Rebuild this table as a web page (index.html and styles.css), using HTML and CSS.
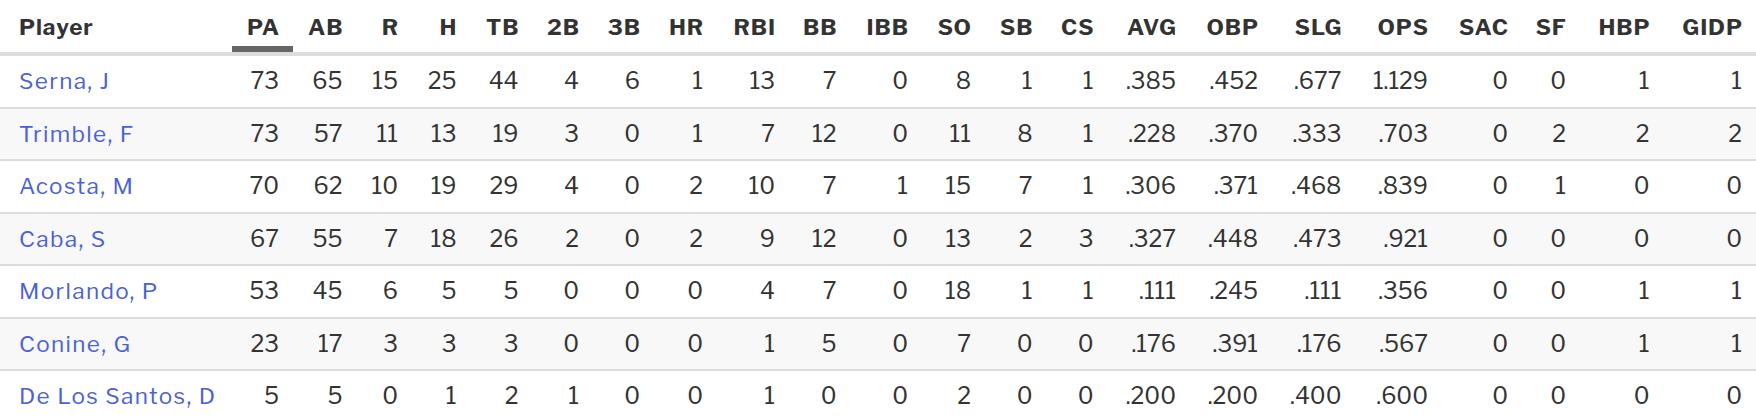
FILE: index.html
```html
<!DOCTYPE html>
<html lang="en">
<head>
<meta charset="utf-8">
<title>Batting stats</title>
<link rel="stylesheet" href="styles.css">
</head>
<body>
<div class="stats">
  <div class="row head">
    <div class="cell name">Player</div>
    <div class="cell sorted">PA</div><div class="cell">AB</div><div class="cell">R</div><div class="cell">H</div><div class="cell">TB</div><div class="cell">2B</div><div class="cell">3B</div><div class="cell">HR</div><div class="cell">RBI</div><div class="cell">BB</div><div class="cell">IBB</div><div class="cell">SO</div><div class="cell">SB</div><div class="cell">CS</div><div class="cell">AVG</div><div class="cell">OBP</div><div class="cell">SLG</div><div class="cell">OPS</div><div class="cell">SAC</div><div class="cell">SF</div><div class="cell">HBP</div><div class="cell">GIDP</div>
  </div>
  <div class="row">
    <div class="cell name"><a href="#">Serna, J</a></div>
    <div class="cell">73</div><div class="cell">65</div><div class="cell">15</div><div class="cell">25</div><div class="cell">44</div><div class="cell">4</div><div class="cell">6</div><div class="cell">1</div><div class="cell">13</div><div class="cell">7</div><div class="cell">0</div><div class="cell">8</div><div class="cell">1</div><div class="cell">1</div><div class="cell">.385</div><div class="cell">.452</div><div class="cell">.677</div><div class="cell">1.129</div><div class="cell">0</div><div class="cell">0</div><div class="cell">1</div><div class="cell">1</div>
  </div>
  <div class="row alt">
    <div class="cell name"><a href="#">Trimble, F</a></div>
    <div class="cell">73</div><div class="cell">57</div><div class="cell">11</div><div class="cell">13</div><div class="cell">19</div><div class="cell">3</div><div class="cell">0</div><div class="cell">1</div><div class="cell">7</div><div class="cell">12</div><div class="cell">0</div><div class="cell">11</div><div class="cell">8</div><div class="cell">1</div><div class="cell">.228</div><div class="cell">.370</div><div class="cell">.333</div><div class="cell">.703</div><div class="cell">0</div><div class="cell">2</div><div class="cell">2</div><div class="cell">2</div>
  </div>
  <div class="row">
    <div class="cell name"><a href="#">Acosta, M</a></div>
    <div class="cell">70</div><div class="cell">62</div><div class="cell">10</div><div class="cell">19</div><div class="cell">29</div><div class="cell">4</div><div class="cell">0</div><div class="cell">2</div><div class="cell">10</div><div class="cell">7</div><div class="cell">1</div><div class="cell">15</div><div class="cell">7</div><div class="cell">1</div><div class="cell">.306</div><div class="cell">.371</div><div class="cell">.468</div><div class="cell">.839</div><div class="cell">0</div><div class="cell">1</div><div class="cell">0</div><div class="cell">0</div>
  </div>
  <div class="row alt">
    <div class="cell name"><a href="#">Caba, S</a></div>
    <div class="cell">67</div><div class="cell">55</div><div class="cell">7</div><div class="cell">18</div><div class="cell">26</div><div class="cell">2</div><div class="cell">0</div><div class="cell">2</div><div class="cell">9</div><div class="cell">12</div><div class="cell">0</div><div class="cell">13</div><div class="cell">2</div><div class="cell">3</div><div class="cell">.327</div><div class="cell">.448</div><div class="cell">.473</div><div class="cell">.921</div><div class="cell">0</div><div class="cell">0</div><div class="cell">0</div><div class="cell">0</div>
  </div>
  <div class="row">
    <div class="cell name"><a href="#">Morlando, P</a></div>
    <div class="cell">53</div><div class="cell">45</div><div class="cell">6</div><div class="cell">5</div><div class="cell">5</div><div class="cell">0</div><div class="cell">0</div><div class="cell">0</div><div class="cell">4</div><div class="cell">7</div><div class="cell">0</div><div class="cell">18</div><div class="cell">1</div><div class="cell">1</div><div class="cell">.111</div><div class="cell">.245</div><div class="cell">.111</div><div class="cell">.356</div><div class="cell">0</div><div class="cell">0</div><div class="cell">1</div><div class="cell">1</div>
  </div>
  <div class="row alt">
    <div class="cell name"><a href="#">Conine, G</a></div>
    <div class="cell">23</div><div class="cell">17</div><div class="cell">3</div><div class="cell">3</div><div class="cell">3</div><div class="cell">0</div><div class="cell">0</div><div class="cell">0</div><div class="cell">1</div><div class="cell">5</div><div class="cell">0</div><div class="cell">7</div><div class="cell">0</div><div class="cell">0</div><div class="cell">.176</div><div class="cell">.391</div><div class="cell">.176</div><div class="cell">.567</div><div class="cell">0</div><div class="cell">0</div><div class="cell">1</div><div class="cell">1</div>
  </div>
  <div class="row">
    <div class="cell name"><a href="#">De Los Santos, D</a></div>
    <div class="cell">5</div><div class="cell">5</div><div class="cell">0</div><div class="cell">1</div><div class="cell">2</div><div class="cell">1</div><div class="cell">0</div><div class="cell">0</div><div class="cell">1</div><div class="cell">0</div><div class="cell">0</div><div class="cell">2</div><div class="cell">0</div><div class="cell">0</div><div class="cell">.200</div><div class="cell">.200</div><div class="cell">.400</div><div class="cell">.600</div><div class="cell">0</div><div class="cell">0</div><div class="cell">0</div><div class="cell">0</div>
  </div>
</div>
</body>
</html>
```
FILE: styles.css
```css
html, body {
  margin: 0;
  padding: 0;
  background: #ffffff;
}

body {
  font-family: "Libre Franklin", Inter, "Noto Sans", sans-serif;
  font-size: 23px;
  font-variant-numeric: tabular-nums;
  color: #333333;
  width: 1756px;
  overflow: hidden;
}

.stats {
  display: flex;
  flex-direction: column;
  width: 1756px;
}

.row {
  display: grid;
  grid-template-columns: 232px 61px 63.5px 55.5px 58.5px 62px 60.5px 61px 63px 72px 61.5px 71.5px 63px 61.5px 61px 82.5px 82px 83.5px 86.5px 80px 58px 83.5px 92.5px;
  height: 50.5px;
  border-bottom: 2px solid #dcdcdc;
  background: #ffffff;
}

.row.alt {
  background: #f8f8f8;
}

.row.head {
  height: 52px;
  border-bottom: 4px solid #dcdcdc;
  font-weight: 700;
  font-size: 22.5px;
  letter-spacing: 0.9px;
}

.cell {
  display: flex;
  align-items: center;
  justify-content: flex-end;
  padding-right: 14px;
  white-space: nowrap;
}

.head .cell {
  padding-top: 2px;
  padding-right: 13.1px;
}

.cell.name {
  justify-content: flex-start;
  padding-left: 19px;
  padding-right: 0;
}

.cell.sorted {
  box-shadow: inset 0 -6px 0 #666666;
}

.cell a {
  color: #4a62d3;
  text-decoration: none;
  font-size: 22.5px;
  letter-spacing: 1.35px;
}
```
